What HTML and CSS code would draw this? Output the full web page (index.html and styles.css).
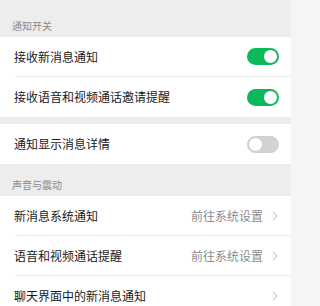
FILE: index.html
```html
<!DOCTYPE html>
<html lang="zh">
<head>
<meta charset="utf-8">
<link rel="stylesheet" href="styles.css">
</head>
<body>
<div class="page">
  <div class="group-title first">通知开关</div>
  <div class="card">
    <div class="row bordered">
      <span class="label">接收新消息通知</span>
      <span class="switch on"><span class="knob"></span></span>
    </div>
    <div class="row">
      <span class="label">接收语音和视频通话邀请提醒</span>
      <span class="switch on"><span class="knob"></span></span>
    </div>
  </div>
  <div class="gap"></div>
  <div class="card">
    <div class="row">
      <span class="label">通知显示消息详情</span>
      <span class="switch off"><span class="knob"></span></span>
    </div>
  </div>
  <div class="group-title">声音与震动</div>
  <div class="card">
    <div class="row bordered">
      <span class="label">新消息系统通知</span>
      <span class="value">前往系统设置</span>
      <svg class="chev" width="6" height="10" viewBox="0 0 6 10"><polyline points="1,1 5,5 1,9" fill="none" stroke="#b4b4b4" stroke-width="1"/></svg>
    </div>
    <div class="row bordered">
      <span class="label">语音和视频通话提醒</span>
      <span class="value">前往系统设置</span>
      <svg class="chev" width="6" height="10" viewBox="0 0 6 10"><polyline points="1,1 5,5 1,9" fill="none" stroke="#b4b4b4" stroke-width="1"/></svg>
    </div>
    <div class="row">
      <span class="label">聊天界面中的新消息通知</span>
      <svg class="chev" width="6" height="10" viewBox="0 0 6 10"><polyline points="1,1 5,5 1,9" fill="none" stroke="#b4b4b4" stroke-width="1"/></svg>
    </div>
  </div>
</div>
</body>
</html>
```
FILE: styles.css
```css
html, body {
  margin: 0;
  padding: 0;
  background: #f5f5f5;
  font-family: "Noto Sans CJK SC", "Noto Sans", sans-serif;
}
.page {
  width: 291px;
  height: 306px;
  overflow: hidden;
  background: #ededed;
}
.group-title {
  height: 32px;
  box-sizing: border-box;
  display: flex;
  align-items: flex-end;
  padding: 0 0 5px 12px;
  font-size: 10px;
  line-height: 12px;
  color: #8a8a8a;
}
.group-title.first {
  height: 37px;
  padding-bottom: 5px;
}
.card {
  background: #ffffff;
  padding-left: 15px;
}
.row {
  height: 40px;
  box-sizing: border-box;
  display: flex;
  align-items: center;
  padding-right: 12px;
}
.row.bordered {
  border-bottom: 1px solid #ececec;
}
.label {
  flex: 1;
  margin-left: -1px;
  font-size: 12px;
  line-height: 14px;
  color: #1a1a1a;
}
.value {
  font-size: 12px;
  line-height: 14px;
  color: #8c8c8c;
  margin-right: 9px;
}
.chev {
  display: block;
  margin-right: 1px;
}
.gap {
  height: 7px;
}
.switch {
  width: 32px;
  height: 17px;
  box-sizing: border-box;
  border-radius: 9px;
  display: flex;
  align-items: center;
  padding: 1px;
}
.switch.on {
  background: #09b95a;
  justify-content: flex-end;
}
.switch.off {
  background: #d3d3d3;
  justify-content: flex-start;
  border: 1px solid #cfcfcf;
  padding: 0;
}
.knob {
  width: 15px;
  height: 15px;
  border-radius: 50%;
  background: #ffffff;
  box-sizing: border-box;
}
.switch.on .knob {
  border: 1px solid #0fa855;
}
.switch.off .knob {
  border: 1px solid #c8c8c8;
}
```
